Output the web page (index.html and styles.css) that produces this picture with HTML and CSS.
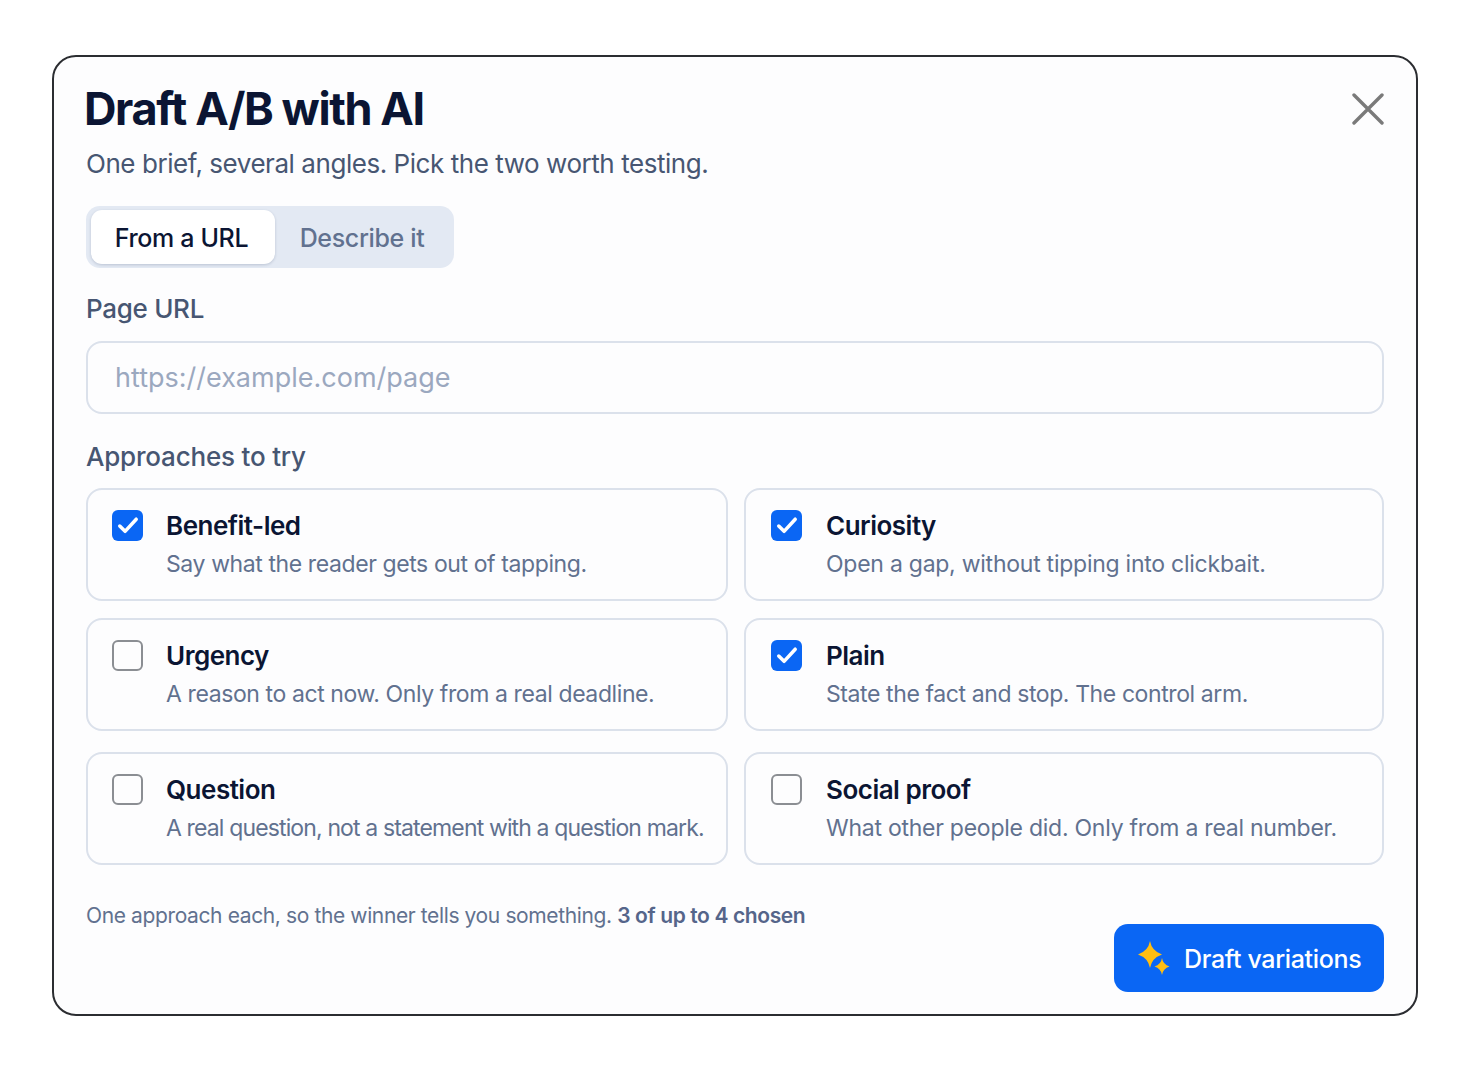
FILE: index.html
```html
<!DOCTYPE html>
<html lang="en">
<head>
<meta charset="utf-8">
<title>Draft A/B with AI</title>
<link rel="stylesheet" href="styles.css">
</head>
<body>
<main class="modal">
  <header class="head">
    <h1>Draft A/B with AI</h1>
    <svg class="close" viewBox="0 0 32 32" aria-label="Close"><path d="M2 2 30 30M30 2 2 30"/></svg>
  </header>
  <p class="sub">One brief, several angles. Pick the two worth testing.</p>
  <div class="tabs">
    <span class="tab on">From a URL</span>
    <span class="tab">Describe it</span>
  </div>
  <div class="label url-label">Page URL</div>
  <div class="input">https://example.com/page</div>
  <div class="label app-label">Approaches to try</div>
  <div class="grid">
    <div class="card"><span class="box on"><svg viewBox="0 0 32 32"><path d="M8 16.500 13.500 22 25 9.500"/></svg></span><div><div class="name">Benefit-led</div><div class="desc">Say what the reader gets out of tapping.</div></div></div>
    <div class="card"><span class="box on"><svg viewBox="0 0 32 32"><path d="M8 16.500 13.500 22 25 9.500"/></svg></span><div><div class="name">Curiosity</div><div class="desc wide">Open a gap, without tipping into clickbait.</div></div></div>
    <div class="card"><span class="box"></span><div><div class="name">Urgency</div><div class="desc">A reason to act now. Only from a real deadline.</div></div></div>
    <div class="card"><span class="box on"><svg viewBox="0 0 32 32"><path d="M8 16.500 13.500 22 25 9.500"/></svg></span><div><div class="name">Plain</div><div class="desc">State the fact and stop. The control arm.</div></div></div>
    <div class="card last"><span class="box"></span><div><div class="name">Question</div><div class="desc tight">A real question, not a statement with a question mark.</div></div></div>
    <div class="card last"><span class="box"></span><div><div class="name">Social proof</div><div class="desc wide">What other people did. Only from a real number.</div></div></div>
  </div>
  <footer class="foot">
    <p class="note">One approach each, so the winner tells you something. <b>3 of up to 4 chosen</b></p>
    <button class="go" type="button">
      <svg viewBox="0 0 34 34"><path d="M14 0Q15.800 10 26 13.500 15.800 17 14 27 12.200 17 2 13.500 12.200 10 14 0Z"/><path d="M26 17Q27 23.500 33.500 25.500 27 27.500 26 34 25 27.500 18.500 25.500 25 23.500 26 17Z"/></svg>
      Draft variations
    </button>
  </footer>
</main>
</body>
</html>
```
FILE: styles.css
```css
* { box-sizing: border-box; }
html, body { margin: 0; height: 100%; }
body {
  background: #fff;
  font-family: Inter, "Noto Sans", sans-serif;
  display: flex;
  align-items: center;
  justify-content: center;
  height: 1070px;
}
.modal {
  width: 1366px;
  height: 961px;
  border: 2px solid #2b2d31;
  border-radius: 24px;
  background: #fdfdfe;
  padding: 0 32px;
  display: flex;
  flex-direction: column;
}
.head {
  display: flex;
  justify-content: space-between;
  align-items: center;
  height: 56px;
  margin-top: 24px;
}
h1 {
  margin: 0 0 0 -2px;
  font-size: 45px;
  line-height: 56px;
  font-weight: 700;
  letter-spacing: -1.4px;
  color: #0b1533;
}
.close { width: 32px; height: 32px; fill: none; stroke: #7a7a7a; stroke-width: 3.4; stroke-linecap: round; }
.sub { margin: 10px 0 0; font-size: 26px; line-height: 34px; letter-spacing: -0.45px; color: #475672; }
.tabs {
  display: flex;
  align-self: flex-start;
  width: 368px;
  height: 62px;
  margin-top: 25px;
  padding: 4px 5px;
  border-radius: 14px;
  background: #e3e9f3;
}
.tab {
  display: flex;
  flex: none;
  align-items: center;
  justify-content: center;
  height: 54px;
  width: 174px;
  padding-top: 2px;
  font-size: 25px;
  font-weight: 500;
  letter-spacing: -0.35px;
  color: #61718f;
}
.tab.on {
  width: 184px;
  padding-right: 3px;
  background: #fff;
  color: #0b1533;
  border-radius: 11px;
  box-shadow: 0 1px 3px rgba(30, 50, 90, .2);
}
.label { font-size: 26px; line-height: 34px; font-weight: 500; letter-spacing: -0.3px; color: #475672; }
.url-label { margin-top: 24px; }
.input {
  display: flex;
  align-items: center;
  height: 73px;
  margin-top: 15px;
  padding-left: 27px;
  border: 2px solid #dbe1eb;
  border-radius: 16px;
  font-size: 27px;
  color: #9ba8bf;
  background: #fdfdfe;
}
.app-label { margin-top: 26px; letter-spacing: -0.2px; }
.grid {
  display: grid;
  grid-template-columns: 642px 640px;
  column-gap: 16px;
  row-gap: 17px;
  margin-top: 14px;
}
.card {
  display: flex;
  gap: 23px;
  height: 113px;
  padding: 20px 24px 0;
  border: 2px solid #dbe1eb;
  border-radius: 16px;
  background: #fdfdfe;
}
.card:nth-child(even) { gap: 24px; padding-left: 25px; }
.card.last { margin-top: 4px; }
.box {
  flex: none;
  width: 31px;
  height: 31px;
  border: 2.5px solid #8b8e93;
  border-radius: 6px;
}
.box.on { background: #0a66f4; border: 0; }
.box svg { display: block; fill: none; stroke: #fff; stroke-width: 3.6; stroke-linecap: round; stroke-linejoin: round; }
.name { font-size: 26px; line-height: 32px; font-weight: 600; letter-spacing: -0.5px; color: #0b1533; }
.desc { margin-top: 6px; font-size: 23px; line-height: 32px; letter-spacing: -0.4px; color: #61718f; white-space: nowrap; }
.desc.wide { letter-spacing: -0.25px; }
.desc.tight { letter-spacing: -0.86px; }
.foot { position: relative; flex: 1; }
.note { margin: 35px 0 0; font-size: 21px; line-height: 32px; letter-spacing: -0.38px; color: #61718f; }
.note b { font-weight: 600; color: #55658a; }
.go {
  position: absolute;
  right: 0;
  bottom: 22px;
  display: flex;
  align-items: center;
  gap: 14px;
  width: 270px;
  height: 68px;
  padding: 2px 0 0 22px;
  border: 0;
  border-radius: 14px;
  background: #0a66f4;
  color: #fff;
  font: 500 25px Inter, sans-serif;
  letter-spacing: -0.35px;
}
.go svg { width: 34px; height: 34px; fill: #ffbe12; flex: none; margin-top: -2px; }
```
